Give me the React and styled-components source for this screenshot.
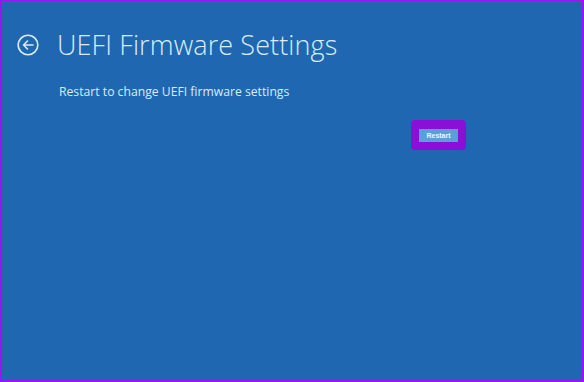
import styled, { createGlobalStyle } from "styled-components";

const GlobalStyle = createGlobalStyle`
  html, body {
    margin: 0;
    padding: 0;
    background: #1f67b1;
  }
  body {
    font-family: "Open Sans", "Noto Sans", sans-serif;
  }
`;

const Screen = styled.div`
  box-sizing: border-box;
  width: 584px;
  height: 382px;
  background: #1f67b1;
  border: 2px solid #9a15ee;
  border-top-width: 1px;
  color: #d9ecf8;
  padding: 27px 0 0 15px;
`;

const Header = styled.div`
  display: flex;
  align-items: center;
  gap: 18px;
`;

const BackButton = styled.button`
  display: flex;
  align-items: center;
  justify-content: center;
  width: 22px;
  height: 24px;
  padding: 0;
  border: none;
  background: none;
  color: #d9ecf8;
  cursor: pointer;
`;

const Title = styled.h1`
  margin: 0;
  font-size: 27px;
  font-weight: 300;
  letter-spacing: 0.1px;
  line-height: 34px;
`;

const Description = styled.p`
  margin: 21px 0 0 42px;
  font-size: 12.2px;
  font-weight: 400;
  line-height: 18px;
`;

const Actions = styled.div`
  display: flex;
  margin: 19px 0 0 394px;
`;

const Highlight = styled.div`
  display: flex;
  align-items: center;
  justify-content: center;
  width: 55px;
  height: 30px;
  box-sizing: border-box;
  background: #8a10d8;
  border-radius: 4px;
`;

const RestartButton = styled.button`
  width: 39px;
  height: 13px;
  padding: 0;
  border: none;
  background: #5b9fd8;
  color: #eef6ff;
  font-family: "Liberation Sans", Arial, sans-serif;
  font-size: 7px;
  font-weight: 700;
  line-height: 13px;
`;

const BackIcon = () => (
  <svg width="22" height="22" viewBox="0 0 22 22" fill="none" stroke="currentColor" strokeWidth="1.6">
    <circle cx="11" cy="11" r="9.8" />
    <path d="M16 11H6.5M10.5 7L6.5 11L10.5 15" strokeLinecap="round" strokeLinejoin="round" />
  </svg>
);

export default function App() {
  return (
    <>
      <GlobalStyle />
      <Screen>
        <Header>
          <BackButton aria-label="Back">
            <BackIcon />
          </BackButton>
          <Title>UEFI Firmware Settings</Title>
        </Header>
        <Description>Restart to change UEFI firmware settings</Description>
        <Actions>
          <Highlight>
            <RestartButton>Restart</RestartButton>
          </Highlight>
        </Actions>
      </Screen>
    </>
  );
}
